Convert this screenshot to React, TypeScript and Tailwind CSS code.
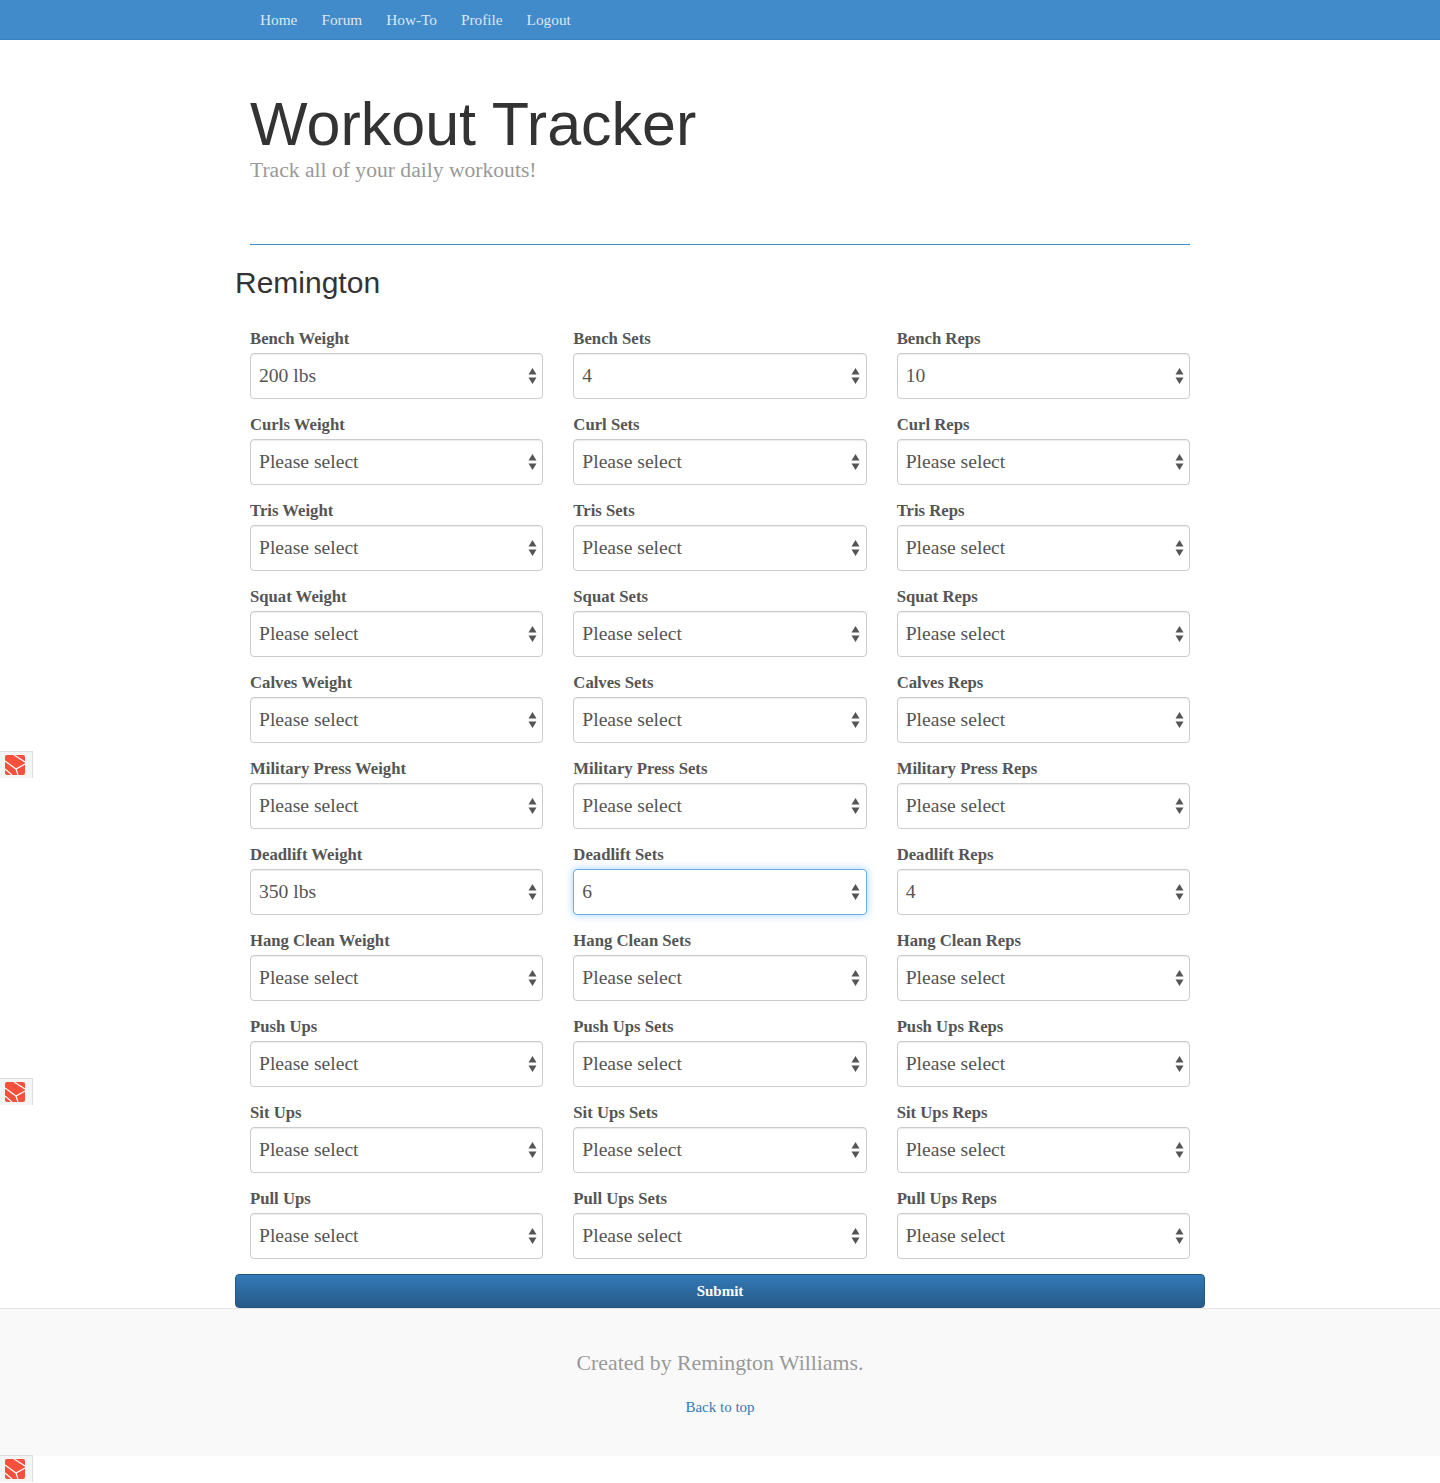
const SERIF = "font-['Liberation_Serif',serif]"

const NAV_LINKS = ['Home', 'Forum', 'How-To', 'Profile', 'Logout']

const EXERCISES = [
  { weight: 'Bench Weight', sets: 'Bench Sets', reps: 'Bench Reps', values: ['200 lbs', '4', '10'] },
  { weight: 'Curls Weight', sets: 'Curl Sets', reps: 'Curl Reps' },
  { weight: 'Tris Weight', sets: 'Tris Sets', reps: 'Tris Reps' },
  { weight: 'Squat Weight', sets: 'Squat Sets', reps: 'Squat Reps' },
  { weight: 'Calves Weight', sets: 'Calves Sets', reps: 'Calves Reps' },
  { weight: 'Military Press Weight', sets: 'Military Press Sets', reps: 'Military Press Reps' },
  { weight: 'Deadlift Weight', sets: 'Deadlift Sets', reps: 'Deadlift Reps', values: ['350 lbs', '6', '4'], focus: 1 },
  { weight: 'Hang Clean Weight', sets: 'Hang Clean Sets', reps: 'Hang Clean Reps' },
  { weight: 'Push Ups', sets: 'Push Ups Sets', reps: 'Push Ups Reps' },
  { weight: 'Sit Ups', sets: 'Sit Ups Sets', reps: 'Sit Ups Reps' },
  { weight: 'Pull Ups', sets: 'Pull Ups Sets', reps: 'Pull Ups Reps' },
]

function SelectField({ label, value, focused }: { label: string; value?: string; focused?: boolean }) {
  const text = value ?? 'Please select'
  return (
    <div className="mb-[15px]">
      <label className="mb-[5px] block h-5 text-[16.7px] leading-[22px] font-bold text-[#555]">{label}</label>
      <div className="relative">
        <select
          defaultValue={text}
          className={`block h-[46px] w-full appearance-none rounded-[4px] border bg-white px-2 text-[19.6px] text-[#555] outline-none ${SERIF} ${
            focused
              ? 'border-[#66afe9] shadow-[0_0_8px_rgba(102,175,233,0.6)]'
              : 'border-[#ccc] shadow-[inset_0_1px_1px_rgba(0,0,0,0.075)]'
          }`}
        >
          <option>{text}</option>
        </select>
        <svg className="pointer-events-none absolute top-[14px] right-[6.5px]" width="9" height="18" viewBox="0 0 9 18">
          <path d="M4.5 1 L8.5 7.5 H0.5 Z M0.5 10.5 H8.5 L4.5 17 Z" fill="#555" />
        </svg>
      </div>
    </div>
  )
}

function DebugTab({ className }: { className: string }) {
  return (
    <div className={`absolute left-0 flex h-[27px] w-[33px] items-center border-t border-r border-[#ddd] bg-[#f5f5f5] pl-[5px] ${className}`}>
      <svg width="20" height="20" viewBox="0 0 20 20">
        <rect width="20" height="20" rx="2" fill="#f4503c" />
        <path d="M0 6 L11 14 L20 9 M9 0 L20 7 M11 14 L13 20 M0 14 L7 20" stroke="#fff" strokeWidth="1.2" fill="none" />
      </svg>
    </div>
  )
}

export default function App() {
  return (
    <div className={`relative min-h-[1483px] bg-white text-[#555] ${SERIF}`}>
      <nav className="h-10 border-b border-[#3a7fbd] bg-[#428bca]">
        <ul className="mx-auto flex w-[970px] pl-[25px]">
          {NAV_LINKS.map((link) => (
            <li key={link} className="mr-[24px] text-[15.3px] leading-10 text-[#dbe8f4]">
              {link}
            </li>
          ))}
        </ul>
      </nav>

      <div className="mx-auto w-[970px]">
        <header className="mx-[15px] h-[205px] border-b border-[#428bca] pt-[51px]">
          <h1 className="font-['Liberation_Sans',sans-serif] text-[61px] leading-[66px] text-[#333]">Workout Tracker</h1>
          <p className="-mt-[2px] text-[21.6px] leading-[30px] text-[#999]">Track all of your daily workouts!</p>
        </header>

        <h2 className="mt-[21px] mb-[29px] font-['Liberation_Sans',sans-serif] text-[30px] leading-[33px] text-[#333]">Remington</h2>

        <div className="mx-[15px]">
          {EXERCISES.map((row) => (
            <div key={row.weight} className="grid grid-cols-3 gap-x-[30px]">
              <SelectField label={row.weight} value={row.values?.[0]} />
              <SelectField label={row.sets} value={row.values?.[1]} focused={row.focus === 1} />
              <SelectField label={row.reps} value={row.values?.[2]} />
            </div>
          ))}
        </div>

        <button className="block h-[34px] w-full rounded-[4px] border border-[#245580] bg-gradient-to-b from-[#337ab7] to-[#265a88] text-[15px] font-bold text-white">
          Submit
        </button>
      </div>

      <footer className="h-[148px] border-t border-[#e5e5e5] bg-[#f9f9f9] pt-[39px] text-center">
        <p className="text-[21.8px] leading-[30px] text-[#999]">Created by Remington Williams.</p>
        <a className="mt-[19px] block text-[15px] leading-5 text-[#337ab7]">Back to top</a>
      </footer>

      <DebugTab className="top-[751px]" />
      <DebugTab className="top-[1078px]" />
      <DebugTab className="top-[1455px]" />
    </div>
  )
}
